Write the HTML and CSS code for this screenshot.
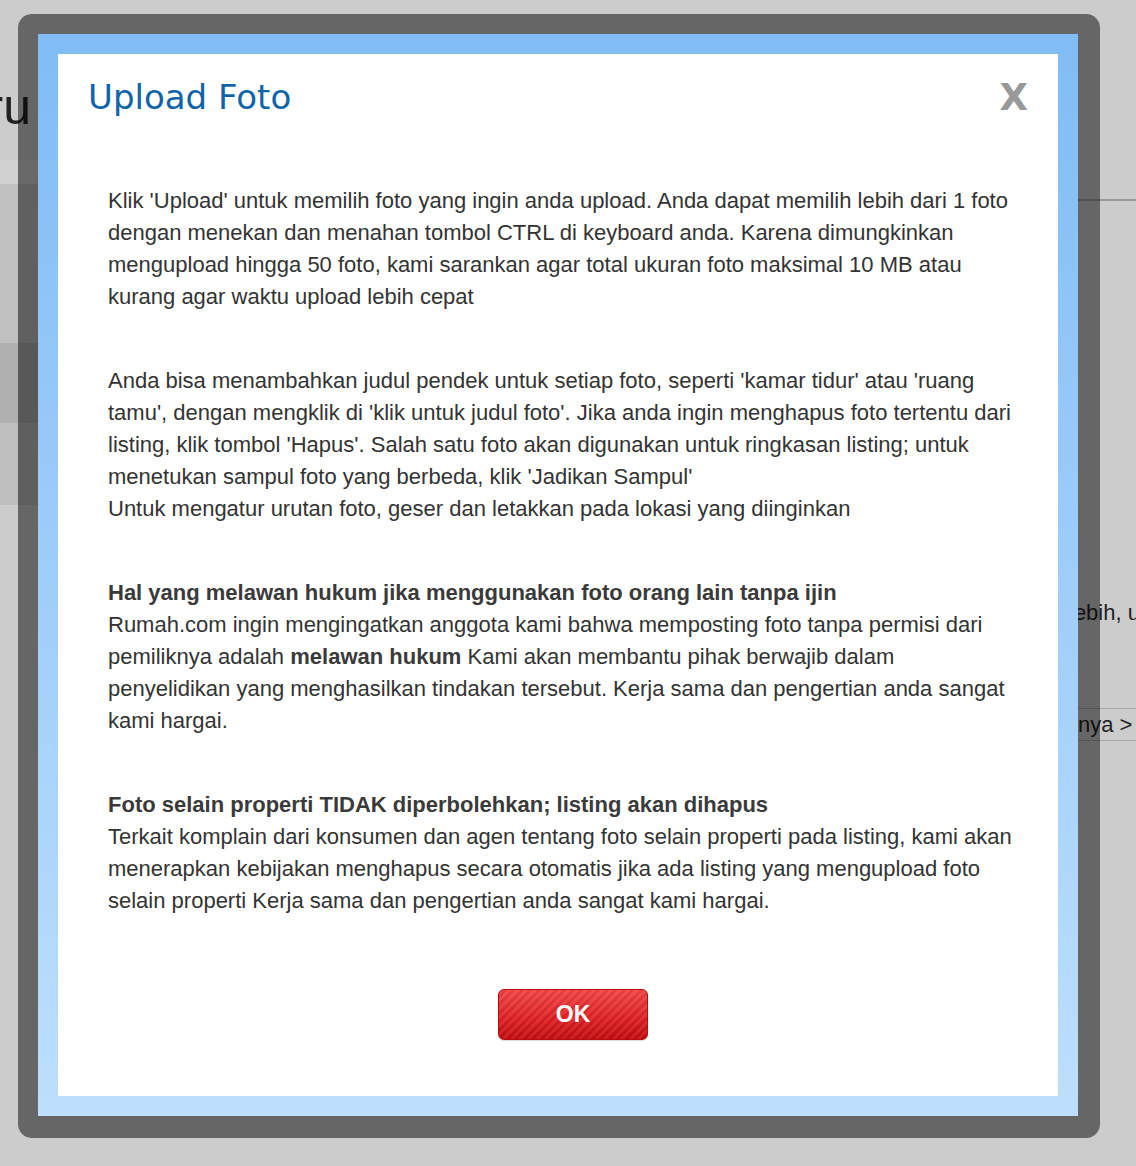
FILE: index.html
```html
<!DOCTYPE html>
<html lang="id">
<head>
<meta charset="utf-8">
<title>Upload Foto</title>
<link rel="stylesheet" href="styles.css">
</head>
<body>
<div class="page">
  <div class="page-left">
    <div class="bg-title"><span>Listing Baru</span></div>
    <div class="band band-a"></div>
    <div class="band band-b"></div>
    <div class="band band-c"></div>
    <div class="band band-d"></div>
  </div>
  <div class="page-right">
    <div class="rule"></div>
    <p class="bg-text">lebih, untuk</p>
    <div class="bg-nav">nya &gt;</div>
  </div>
</div>

<div class="modal">
  <div class="modal-frame">
    <div class="modal-box">
      <div class="modal-head">
        <h1 class="modal-title">Upload Foto</h1>
        <span class="modal-close">X</span>
      </div>
      <div class="modal-body">
        <p class="para">Klik 'Upload' untuk memilih foto yang ingin anda upload. Anda dapat memilih lebih dari 1 foto dengan menekan dan menahan tombol CTRL di keyboard anda. Karena dimungkinkan mengupload hingga 50 foto, kami sarankan agar total ukuran foto maksimal 10 MB atau kurang agar waktu upload lebih cepat</p>
        <p class="para">Anda bisa menambahkan judul pendek untuk setiap foto, seperti 'kamar tidur' atau 'ruang tamu', dengan mengklik di 'klik untuk judul foto'. Jika anda ingin menghapus foto tertentu dari listing, klik tombol 'Hapus'. Salah satu foto akan digunakan untuk ringkasan listing; untuk menetukan sampul foto yang berbeda, klik 'Jadikan Sampul'<br>Untuk mengatur urutan foto, geser dan letakkan pada lokasi yang diinginkan</p>
        <p class="para"><strong>Hal yang melawan hukum jika menggunakan foto orang lain tanpa ijin</strong><br>Rumah.com ingin mengingatkan anggota kami bahwa memposting foto tanpa permisi dari pemiliknya adalah <strong>melawan hukum</strong> Kami akan membantu pihak berwajib dalam penyelidikan yang menghasilkan tindakan tersebut. Kerja sama dan pengertian anda sangat kami hargai.</p>
        <p class="para"><strong>Foto selain properti TIDAK diperbolehkan; listing akan dihapus</strong><br>Terkait komplain dari konsumen dan agen tentang foto selain properti pada listing, kami akan menerapkan kebijakan menghapus secara otomatis jika ada listing yang mengupload foto selain properti Kerja sama dan pengertian anda sangat kami hargai.</p>
        <button class="btn-ok" type="button">OK</button>
      </div>
    </div>
  </div>
</div>
</body>
</html>
```

FILE: styles.css
```css
html, body {
  margin: 0;
  padding: 0;
}

body {
  background: #cccccc;
  font-family: "Liberation Sans", Arial, sans-serif;
  width: 1136px;
  height: 1166px;
  overflow: hidden;
  position: relative;
}

.page {
  display: flex;
  justify-content: space-between;
  height: 1166px;
}

.page-left {
  width: 40px;
}

.bg-title {
  display: flex;
  justify-content: flex-end;
  width: 31px;
  overflow: hidden;
  white-space: nowrap;
  margin-top: 78px;
  height: 82px;
  font-size: 50px;
  line-height: 58px;
  color: #222;
}

.band { width: 40px; }
.band-a { height: 24px; background: #d1d1d1; }
.band-b { height: 159px; background: #c0c0c0; }
.band-c { height: 80px; background: #b0b0b0; }
.band-d { height: 82px; background: #bfbfbf; }

.page-right {
  width: 76px;
  overflow: hidden;
  padding-top: 199px;
  white-space: nowrap;
  color: #222;
  font-size: 22px;
}

.rule {
  height: 2px;
  background: #9a9a9a;
}

.bg-text {
  margin: 399px 0 0;
  padding-left: 9px;
  line-height: 26px;
}

.bg-nav {
  margin-top: 82px;
  padding-left: 18px;
  border-top: 1px solid #a8a8a8;
  border-bottom: 1px solid #a8a8a8;
  line-height: 31px;
}

/* Modal */
.modal {
  position: absolute;
  left: 18px;
  top: 14px;
  width: 1082px;
  height: 1124px;
  box-sizing: border-box;
  padding: 20px 22px 22px 20px;
  background: rgba(0, 0, 0, 0.5);
  border-radius: 14px;
}

.modal-frame {
  height: 100%;
  box-sizing: border-box;
  padding: 20px;
  background: linear-gradient(180deg, #80bcf5 0%, #bddffd 100%);
}

.modal-box {
  height: 100%;
  background: #ffffff;
}

.modal-head {
  display: flex;
  justify-content: space-between;
  align-items: flex-start;
  padding: 23px 30px 0 30px;
}

.modal-title {
  margin: 0;
  font-family: "DejaVu Sans", Verdana, sans-serif;
  font-weight: normal;
  font-size: 34px;
  line-height: 40px;
  color: #0f64a9;
}

.modal-close {
  margin-top: 1px;
  font-family: "DejaVu Sans", Verdana, sans-serif;
  font-weight: bold;
  font-size: 37px;
  line-height: 40px;
  color: #999999;
}

.modal-body {
  margin-top: 67px;
  padding: 0 46px 0 50px;
  color: #333333;
  font-size: 22px;
  line-height: 32px;
}

.para {
  margin: 0 0 52px;
}

.para strong {
  color: #3a3a3a;
}

.btn-ok {
  display: block;
  margin: 72px 0 0 390px;
  width: 150px;
  height: 51px;
  border: 1px solid #b50d10;
  border-radius: 6px;
  background:
    repeating-linear-gradient(135deg, rgba(255,255,255,0.07) 0 3px, rgba(0,0,0,0.05) 3px 6px),
    linear-gradient(180deg, #f24545 0%, #e02326 55%, #c40c0f 100%);
  color: #ffffff;
  font-family: "Liberation Sans", Arial, sans-serif;
  font-weight: bold;
  font-size: 23px;
  padding: 0;
  box-shadow: 0 1px 1px rgba(0,0,0,0.15);
}
```
